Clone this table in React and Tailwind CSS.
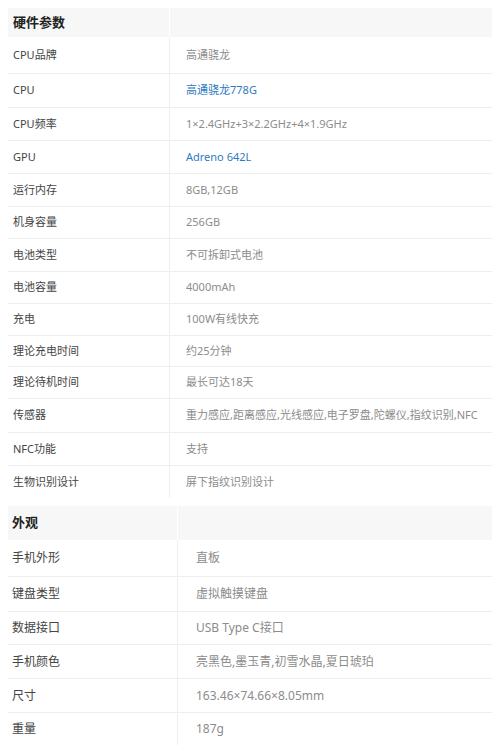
import React from 'react';

const hardware = [
  { label: 'CPU品牌', value: '高通骁龙', h: 'h-[37px]' },
  { label: 'CPU', value: '高通骁龙778G', h: 'h-[34px]', link: true },
  { label: 'CPU频率', value: '1×2.4GHz+3×2.2GHz+4×1.9GHz', h: 'h-[33px]' },
  { label: 'GPU', value: 'Adreno 642L', h: 'h-[33px]', link: true },
  { label: '运行内存', value: '8GB,12GB', h: 'h-[33px]' },
  { label: '机身容量', value: '256GB', h: 'h-[32px]' },
  { label: '电池类型', value: '不可拆卸式电池', h: 'h-[33px]' },
  { label: '电池容量', value: '4000mAh', h: 'h-[32px]' },
  { label: '充电', value: '100W有线快充', h: 'h-[32px]' },
  { label: '理论充电时间', value: '约25分钟', h: 'h-[31px]' },
  { label: '理论待机时间', value: '最长可达18天', h: 'h-[32px]' },
  { label: '传感器', value: '重力感应,距离感应,光线感应,电子罗盘,陀螺仪,指纹识别,NFC', h: 'h-[34px]' },
  { label: 'NFC功能', value: '支持', h: 'h-[33px]' },
  { label: '生物识别设计', value: '屏下指纹识别设计', h: 'h-[32px]' },
];

const looks = [
  { label: '手机外形', value: '直板', h: 'h-[37px]' },
  { label: '键盘类型', value: '虚拟触摸键盘', h: 'h-[35px]' },
  { label: '数据接口', value: 'USB Type C接口', h: 'h-[33px]' },
  { label: '手机颜色', value: '亮黑色,墨玉青,初雪水晶,夏日琥珀', h: 'h-[34px]' },
  { label: '尺寸', value: '163.46×74.66×8.05mm', h: 'h-[34px]' },
  { label: '重量', value: '187g', h: 'h-[32px]' },
];

function SpecTable({ title, rows, leftW, headH, size, labelPad, valuePad }) {
  return (
    <div className="mx-2 w-[484px]">
      <div className={`flex ${headH} bg-[#f7f7f7]`}>
        <div className={`${leftW} shrink-0 flex items-center ${labelPad} border-r border-white text-[13px] font-bold text-[#222]`}>
          {title}
        </div>
        <div className="flex-1" />
      </div>
      {rows.map((r) => (
        <div key={r.label} className={`flex ${r.h} border-b border-[#efefef] last:border-b-0 ${size}`}>
          <div className={`${leftW} shrink-0 flex items-center ${labelPad} border-r border-[#efefef] text-[#444]`}>
            {r.label}
          </div>
          <div className={`flex-1 flex items-center ${valuePad} ${r.link ? 'text-[#2f7bbf]' : 'text-[#8c8c8c]'}`}>
            {r.value}
          </div>
        </div>
      ))}
    </div>
  );
}

export default function App() {
  return (
    <div
      className="w-[500px] h-[755px] bg-white pt-2 overflow-hidden"
      style={{ fontFamily: '"Noto Sans", "Noto Sans CJK SC", sans-serif' }}
    >
      <SpecTable
        title="硬件参数"
        rows={hardware}
        leftW="w-[162px]"
        headH="h-[29px]"
        size="text-[11px]"
        labelPad="pl-[5px]"
        valuePad="pl-[16px]"
      />
      <div className="h-2" />
      <SpecTable
        title="外观"
        rows={looks}
        leftW="w-[170px]"
        headH="h-[34px]"
        size="text-[12px]"
        labelPad="pl-[4px]"
        valuePad="pl-[18px]"
      />
    </div>
  );
}
